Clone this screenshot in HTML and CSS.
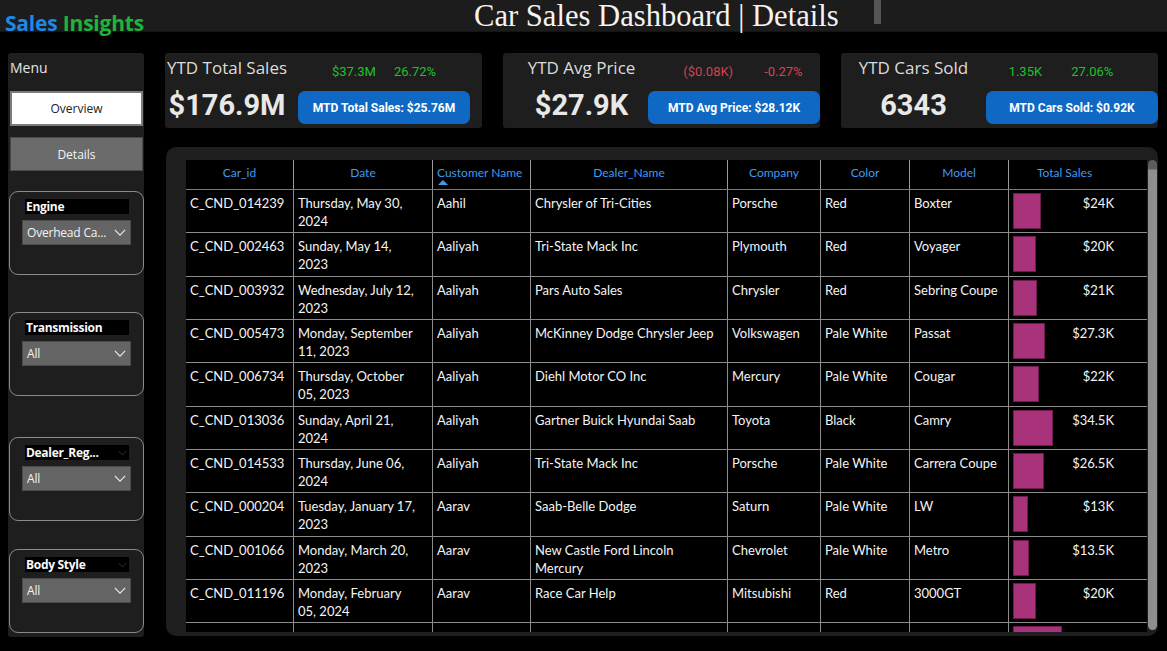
FILE: index.html
```html
<!DOCTYPE html>
<html lang="en">
<head>
<meta charset="utf-8">
<title>Car Sales Dashboard | Details</title>
<link rel="stylesheet" href="styles.css">
</head>
<body>
<header class="topbar">
  <div class="brand"><span class="brand-a">Sales</span> <span class="brand-b">Insights</span></div>
  <h1 class="title">Car Sales Dashboard | Details</h1>
  <div class="topbar-tab"></div>
</header>

<div class="main">
  <aside class="sidebar">
    <div class="menu-label">Menu</div>
    <button class="nav nav-overview">Overview</button>
    <button class="nav nav-details">Details</button>

    <div class="filter filter-engine">
      <div class="filter-label">Engine</div>
      <div class="dropdown"><span>Overhead Ca...</span><svg class="chev" viewBox="0 0 14 8"><path d="M1 1 L7 7 L13 1"/></svg></div>
    </div>
    <div class="filter filter-trans">
      <div class="filter-label">Transmission</div>
      <div class="dropdown"><span>All</span><svg class="chev" viewBox="0 0 14 8"><path d="M1 1 L7 7 L13 1"/></svg></div>
    </div>
    <div class="filter filter-region">
      <div class="filter-label">Dealer_Reg...<svg class="chev-faint" viewBox="0 0 14 8"><path d="M1 1 L7 7 L13 1"/></svg></div>
      <div class="dropdown"><span>All</span><svg class="chev" viewBox="0 0 14 8"><path d="M1 1 L7 7 L13 1"/></svg></div>
    </div>
    <div class="filter filter-body">
      <div class="filter-label">Body Style<svg class="chev-faint" viewBox="0 0 14 8"><path d="M1 1 L7 7 L13 1"/></svg></div>
      <div class="dropdown"><span>All</span><svg class="chev" viewBox="0 0 14 8"><path d="M1 1 L7 7 L13 1"/></svg></div>
    </div>
  </aside>

  <section class="content">
    <div class="kpis">
      <div class="kpi kpi-sales">
        <div class="kpi-left">
          <div class="kpi-title">YTD Total Sales</div>
          <div class="kpi-value">$176.9M</div>
        </div>
        <div class="kpi-right">
          <div class="kpi-deltas up"><span>$37.3M</span><span>26.72%</span></div>
          <div class="kpi-btn">MTD Total Sales: $25.76M</div>
        </div>
      </div>
      <div class="kpi kpi-price">
        <div class="kpi-left">
          <div class="kpi-title">YTD Avg Price</div>
          <div class="kpi-value">$27.9K</div>
        </div>
        <div class="kpi-right">
          <div class="kpi-deltas down"><span>($0.08K)</span><span>-0.27%</span></div>
          <div class="kpi-btn">MTD Avg Price: $28.12K</div>
        </div>
      </div>
      <div class="kpi kpi-cars">
        <div class="kpi-left">
          <div class="kpi-title">YTD Cars Sold</div>
          <div class="kpi-value">6343</div>
        </div>
        <div class="kpi-right">
          <div class="kpi-deltas up"><span>1.35K</span><span>27.06%</span></div>
          <div class="kpi-btn">MTD Cars Sold: $0.92K</div>
        </div>
      </div>
    </div>

    <div class="table-box">
      <div class="grid">
        <div class="row head">
          <div class="th">Car_id</div>
          <div class="th">Date</div>
          <div class="th th-left">Customer Name<span class="sort"></span></div>
          <div class="th">Dealer_Name</div>
          <div class="th">Company</div>
          <div class="th">Color</div>
          <div class="th">Model</div>
          <div class="th th-sales">Total Sales</div>
        </div>

        <div class="row">
          <div class="td">C_CND_014239</div><div class="td">Thursday, May 30,<br>2024</div><div class="td">Aahil</div><div class="td">Chrysler of Tri-Cities</div><div class="td">Porsche</div><div class="td">Red</div><div class="td">Boxter</div>
          <div class="td td-sales"><span class="bar" style="width:28px"></span><span class="amt">$24K</span></div>
        </div>
        <div class="row">
          <div class="td">C_CND_002463</div><div class="td">Sunday, May 14,<br>2023</div><div class="td">Aaliyah</div><div class="td">Tri-State Mack Inc</div><div class="td">Plymouth</div><div class="td">Red</div><div class="td">Voyager</div>
          <div class="td td-sales"><span class="bar" style="width:23px"></span><span class="amt">$20K</span></div>
        </div>
        <div class="row">
          <div class="td">C_CND_003932</div><div class="td">Wednesday, July 12,<br>2023</div><div class="td">Aaliyah</div><div class="td">Pars Auto Sales</div><div class="td">Chrysler</div><div class="td">Red</div><div class="td">Sebring Coupe</div>
          <div class="td td-sales"><span class="bar" style="width:24px"></span><span class="amt">$21K</span></div>
        </div>
        <div class="row">
          <div class="td">C_CND_005473</div><div class="td">Monday, September<br>11, 2023</div><div class="td">Aaliyah</div><div class="td">McKinney Dodge Chrysler Jeep</div><div class="td">Volkswagen</div><div class="td">Pale White</div><div class="td">Passat</div>
          <div class="td td-sales"><span class="bar" style="width:32px"></span><span class="amt">$27.3K</span></div>
        </div>
        <div class="row">
          <div class="td">C_CND_006734</div><div class="td">Thursday, October<br>05, 2023</div><div class="td">Aaliyah</div><div class="td">Diehl Motor CO Inc</div><div class="td">Mercury</div><div class="td">Pale White</div><div class="td">Cougar</div>
          <div class="td td-sales"><span class="bar" style="width:26px"></span><span class="amt">$22K</span></div>
        </div>
        <div class="row">
          <div class="td">C_CND_013036</div><div class="td">Sunday, April 21,<br>2024</div><div class="td">Aaliyah</div><div class="td">Gartner Buick Hyundai Saab</div><div class="td">Toyota</div><div class="td">Black</div><div class="td">Camry</div>
          <div class="td td-sales"><span class="bar" style="width:40px"></span><span class="amt">$34.5K</span></div>
        </div>
        <div class="row">
          <div class="td">C_CND_014533</div><div class="td">Thursday, June 06,<br>2024</div><div class="td">Aaliyah</div><div class="td">Tri-State Mack Inc</div><div class="td">Porsche</div><div class="td">Pale White</div><div class="td">Carrera Coupe</div>
          <div class="td td-sales"><span class="bar" style="width:31px"></span><span class="amt">$26.5K</span></div>
        </div>
        <div class="row">
          <div class="td">C_CND_000204</div><div class="td">Tuesday, January 17,<br>2023</div><div class="td">Aarav</div><div class="td">Saab-Belle Dodge</div><div class="td">Saturn</div><div class="td">Pale White</div><div class="td">LW</div>
          <div class="td td-sales"><span class="bar" style="width:15px"></span><span class="amt">$13K</span></div>
        </div>
        <div class="row">
          <div class="td">C_CND_001066</div><div class="td">Monday, March 20,<br>2023</div><div class="td">Aarav</div><div class="td">New Castle Ford Lincoln<br>Mercury</div><div class="td">Chevrolet</div><div class="td">Pale White</div><div class="td">Metro</div>
          <div class="td td-sales"><span class="bar" style="width:16px"></span><span class="amt">$13.5K</span></div>
        </div>
        <div class="row">
          <div class="td">C_CND_011196</div><div class="td">Monday, February<br>05, 2024</div><div class="td">Aarav</div><div class="td">Race Car Help</div><div class="td">Mitsubishi</div><div class="td">Red</div><div class="td">3000GT</div>
          <div class="td td-sales"><span class="bar" style="width:23px"></span><span class="amt">$20K</span></div>
        </div>
        <div class="row">
          <div class="td"></div><div class="td"></div><div class="td"></div><div class="td"></div><div class="td"></div><div class="td"></div><div class="td"></div>
          <div class="td td-sales"><span class="bar" style="width:49px"></span><span class="amt"></span></div>
        </div>
      </div>
      <div class="scrollbar"><div class="scroll-thumb"></div></div>
    </div>
  </section>
</div>
</body>
</html>
```

FILE: styles.css
```css
* { box-sizing: border-box; }

html, body {
  margin: 0;
  padding: 0;
  background: #000;
  width: 1167px;
  height: 651px;
  overflow: hidden;
  font-family: "Lato", "Open Sans", sans-serif;
  color: #f2f2f2;
}

/* ---------- top bar ---------- */
.topbar {
  height: 32px;
  background: #1c1c1c;
  display: flex;
  align-items: flex-start;
  padding-left: 5px;
  border-bottom: 1px solid #141414;
}
.brand {
  width: 469px;
  font-family: "Open Sans", sans-serif;
  font-weight: 700;
  font-size: 21px;
  line-height: 22px;
  padding-top: 12px;
  letter-spacing: -0.2px;
  white-space: nowrap;
}
.brand-a { color: #1e88e5; }
.brand-b { color: #1cb53a; }
.title {
  margin: 0;
  font-family: "Liberation Serif", serif;
  font-weight: 400;
  font-size: 30.6px;
  line-height: 32px;
  color: #f4f4f4;
  white-space: nowrap;
}
.topbar-tab {
  width: 7px;
  height: 24px;
  background: #555;
  margin-left: 35px;
}

/* ---------- main ---------- */
.main {
  display: flex;
  padding: 21px 0 0 8px;
}

.sidebar {
  width: 136px;
  height: 584px;
  background: #1e1e1e;
  border-radius: 3px;
  display: flex;
  flex-direction: column;
}
.menu-label {
  font-family: "Open Sans", sans-serif;
  font-size: 14px;
  line-height: 20px;
  color: #e4e4e4;
  margin: 5px 0 0 2px;
}
.nav {
  display: block;
  margin-left: 2px;
  width: 133px;
  font-family: "Open Sans", sans-serif;
  font-size: 12px;
  padding: 0;
  cursor: pointer;
}
.nav-overview {
  margin-top: 13px;
  height: 35px;
  background: #fff;
  border: 2px solid #7c7c7c;
  color: #222;
}
.nav-details {
  margin-top: 11px;
  height: 34px;
  background: #6b6b6b;
  border: 1px solid #4a4a4a;
  color: #f4f4f4;
}

.filter {
  margin-left: 1px;
  width: 135px;
  height: 84px;
  border: 1px solid #8a8a8a;
  border-radius: 9px;
  padding: 7px 0 0 12px;
}
.filter-engine { margin-top: 20px; }
.filter-trans  { margin-top: 37px; }
.filter-region { margin-top: 41px; }
.filter-body   { margin-top: 28px; }

.filter-label {
  margin-left: 3px;
  width: 104px;
  height: 15px;
  background: #000;
  font-family: "Open Sans", sans-serif;
  font-weight: 700;
  font-size: 12px;
  line-height: 15px;
  color: #fafafa;
  padding-left: 1px;
  display: flex;
  align-items: center;
  justify-content: space-between;
  letter-spacing: -0.3px;
}
.chev-faint {
  width: 9px;
  height: 6px;
  margin-right: 2px;
  fill: none;
  stroke: #3a3a3a;
  stroke-width: 1.3;
}
.dropdown {
  margin-top: 6px;
  width: 109px;
  height: 25px;
  background: #646464;
  border: 1px solid #4c4c4c;
  display: flex;
  align-items: center;
  justify-content: space-between;
  padding: 0 4px 0 4px;
  font-family: "Open Sans", sans-serif;
  font-size: 12px;
  color: #f4f4f4;
  letter-spacing: -0.2px;
}
.chev {
  width: 12px;
  height: 7px;
  fill: none;
  stroke: #eaeaea;
  stroke-width: 1.4;
}

/* ---------- content ---------- */
.content {
  margin-left: 21px;
  width: 993px;
  display: flex;
  flex-direction: column;
}

.kpis {
  display: flex;
  gap: 21px;
  height: 75px;
}
.kpi {
  width: 317px;
  height: 75px;
  background: #1e1e1e;
  border-radius: 3px;
  display: flex;
}
.kpi-left {
  display: flex;
  flex-direction: column;
  align-items: center;
}
.kpi-sales .kpi-left { width: 133px; padding-right: 9px; }
.kpi-price .kpi-left { width: 150px; padding-left: 12px; }
.kpi-cars  .kpi-left { width: 147px; }

.kpi-title {
  font-family: "Open Sans", sans-serif;
  font-size: 17px;
  line-height: 24px;
  margin-top: 3px;
  color: #dcdcdc;
  white-space: nowrap;
}
.kpi-value {
  font-family: "Roboto", sans-serif;
  font-weight: 700;
  font-size: 29px;
  line-height: 36px;
  margin-top: 7px;
  color: #e8e8e8;
  white-space: nowrap;
}
.kpi-right {
  width: 172px;
  display: flex;
  flex-direction: column;
  align-items: center;
}
.kpi-deltas {
  display: flex;
  gap: 18px;
  margin-top: 11px;
  height: 16px;
  font-family: "Roboto", sans-serif;
  font-size: 13px;
  line-height: 16px;
}
.kpi-price .kpi-deltas { gap: 31px; margin-left: 18px; }
.kpi-cars .kpi-deltas { gap: 29px; margin-right: 22px; }
.up { color: #1fc02a; }
.down { color: #d8414e; }
.kpi-btn {
  margin-top: 11px;
  width: 172px;
  height: 33px;
  background: #0f69c4;
  border-radius: 7px;
  display: flex;
  align-items: center;
  justify-content: center;
  font-family: "Roboto", sans-serif;
  font-weight: 700;
  font-size: 12px;
  color: #fff;
  white-space: nowrap;
}

/* ---------- table ---------- */
.table-box {
  margin-top: 19px;
  margin-left: 1px;
  width: 992px;
  height: 489px;
  background: #1e1e1e;
  border-radius: 10px;
  padding: 13px 0 4px 20px;
  display: flex;
}
.grid {
  width: 961px;
  height: 472px;
  overflow: hidden;
  background: #000;
}
.row {
  display: grid;
  grid-template-columns: 107px 139px 98px 197px 93px 89px 99px 139px;
  height: 43.33px;
  border-bottom: 1px solid #8c8c8c;
  font-size: 13px;
  line-height: 18px;
  color: #f4f4f4;
}
.row.head {
  height: 30px;
  border-bottom: 1px solid #2d8de6;
}
.th {
  color: #3f9bf0;
  font-size: 12px;
  text-align: center;
  line-height: 16px;
  padding-top: 5px;
  border-left: 1px solid #9a9a9a;
  position: relative;
}
.th:first-child { border-left: none; }
.th-left { text-align: left; padding-left: 4px; }
.th-sales { padding-right: 27px; }
.sort {
  position: absolute;
  left: 5px;
  top: 20px;
  width: 0;
  height: 0;
  border-left: 5px solid transparent;
  border-right: 5px solid transparent;
  border-bottom: 5px solid #3f9bf0;
}
.td {
  padding: 4px 4px 0 4px;
  border-left: 1px solid #8c8c8c;
  overflow: hidden;
  white-space: nowrap;
}
.td:first-child { border-left: none; }
.td-sales {
  display: flex;
  justify-content: space-between;
  padding: 3px 33px 0 4px;
}
.bar {
  display: block;
  height: 36px;
  background: #a8337a;
  border: 1px solid #6e1c50;
}
.amt {
  padding-top: 1px;
}

.scrollbar {
  width: 10px;
  margin-left: 1px;
  height: 472px;
}
.scroll-thumb {
  width: 9px;
  height: 470px;
  border-radius: 5px;
  background: linear-gradient(#5c5c5c 0, #5c5c5c 9px, #8e8e8e 10px);
}
```
